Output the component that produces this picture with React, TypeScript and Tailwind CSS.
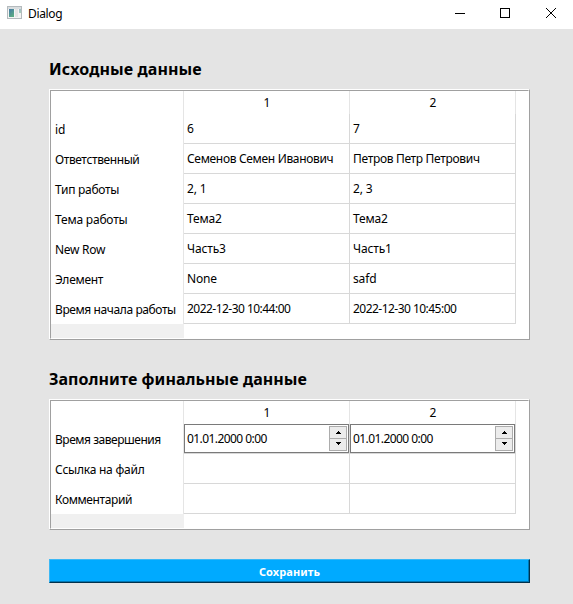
import React from "react";

type Row = { label: string; spacing: string; values: string[] };

const source: Row[] = [
  { label: "id", spacing: "tracking-normal", values: ["6", "7"] },
  { label: "Ответственный", spacing: "tracking-[-0.4px]", values: ["Семенов Семен Иванович", "Петров Петр Петрович"] },
  { label: "Тип работы", spacing: "tracking-[-0.28px]", values: ["2, 1", "2, 3"] },
  { label: "Тема работы", spacing: "tracking-[-0.2px]", values: ["Тема2", "Тема2"] },
  { label: "New Row", spacing: "tracking-[-0.3px]", values: ["Часть3", "Часть1"] },
  { label: "Элемент", spacing: "tracking-[-0.28px]", values: ["None", "safd"] },
  { label: "Время начала работы", spacing: "tracking-[-0.4px]", values: ["2022-12-30 10:44:00", "2022-12-30 10:45:00"] },
];

const final: Row[] = [
  { label: "Время завершения", spacing: "tracking-[-0.47px]", values: ["01.01.2000 0:00", "01.01.2000 0:00"] },
  { label: "Ссылка на файл", spacing: "tracking-[-0.24px]", values: ["", ""] },
  { label: "Комментарий", spacing: "tracking-[-0.37px]", values: ["", ""] },
];

function valueSpacing(value: string) {
  if (/^20/.test(value)) return "tracking-[-0.53px]";
  return value.length > 10 ? "tracking-[-0.32px]" : "tracking-[-0.15px]";
}

function SpinBox({ value }: { value: string }) {
  return (
    <div className="flex h-[29px] w-[165px] items-center justify-between border border-[#7a7a7a] bg-white pl-[2px] pr-px">
      <span className="tracking-[-0.57px]">{value}</span>
      <div className="flex h-[25px] w-[18px] flex-col border border-[#acacac] bg-[#ececec]">
        <div className="flex h-[12px] items-center justify-center border-b border-[#acacac]">
          <svg width="5" height="3" viewBox="0 0 5 3" shapeRendering="crispEdges"><path d="M2 0h1v1h1v1h1v1H0V2h1V1h1z" /></svg>
        </div>
        <div className="flex h-[11px] items-start justify-center pt-[3px]">
          <svg width="5" height="3" viewBox="0 0 5 3" shapeRendering="crispEdges"><path d="M0 0h5v1H4v1H3v1H2V2H1V1H0z" /></svg>
        </div>
      </div>
    </div>
  );
}

function Table({ rows, editor }: { rows: Row[]; editor?: boolean }) {
  return (
    <div className="w-[481px] border border-b-[#a0a0a0] border-l-white border-r-[#a0a0a0] border-t-white">
      <div className="border border-b-white border-l-[#a0a0a0] border-r-white border-t-[#a0a0a0] bg-white">
        <div className="flex h-[23px]">
          <div className="w-[133px] border-r border-[#e5e5e5]" />
          {["1", "2"].map((n) => (
            <div key={n} className="flex w-[166px] items-center justify-center border-r border-[#e5e5e5] pl-px">{n}</div>
          ))}
        </div>
        {rows.map((row, i) => (
          <div key={row.label} className="flex h-[30px]">
            <div className={`flex w-[133px] items-center border-r border-[#e5e5e5] pl-1 pt-[2px] ${row.spacing}`}>{row.label}</div>
            {row.values.map((v, j) =>
              editor && i === 0 ? (
                <div key={j} className="w-[166px] border-b border-r border-[#d8d8d8]"><SpinBox value={v} /></div>
              ) : (
                <div key={j} className={`flex w-[166px] items-center border-b border-r border-[#d8d8d8] pl-[3px] ${valueSpacing(v)}`}>{v}</div>
              )
            )}
          </div>
        ))}
        <div className="h-[14px] w-[133px] bg-[#f0f0f0]" />
      </div>
    </div>
  );
}

export default function App() {
  return (
    <div className="flex h-[604px] w-[573px] flex-col overflow-hidden whitespace-nowrap bg-[#e4e4e4] font-['Noto_Sans',sans-serif] text-[12px] leading-4 text-black">
      <header className="flex h-[29px] items-start bg-white">
        <svg className="ml-[7px] mt-[6px]" width="15" height="14" viewBox="0 0 15 14" shapeRendering="crispEdges">
          <defs>
            <linearGradient id="pane" x1="0" y1="0" x2="0.6" y2="1"><stop stopColor="#4478a8" /><stop offset="1" stopColor="#5bab83" /></linearGradient>
          </defs>
          <path fill="#b4babd" d="M0 0h15v13H0z" />
          <path fill="#d9dddf" d="M1 1h13v2H1z" />
          <path fill="#f4f4f4" d="M1 3h13v9H1z" />
          <path fill="url(#pane)" d="M2 3h5v8H2z" />
          <path fill="#e4e4e4" d="M8 3h3v8H8z" />
          <path fill="url(#pane)" opacity=".5" d="M12 3h2v4h-2z" />
        </svg>
        <span className="ml-[6px] mt-[6px] tracking-[-0.35px]">Dialog</span>
        <svg className="ml-auto mr-[17px] mt-2" width="101" height="10" viewBox="0 0 101 10" fill="none" stroke="#000">
          <path d="M0 5.5h10M45.5.5h9v9h-9z" shapeRendering="crispEdges" />
          <path d="M91 0l10 10M101 0L91 10" />
        </svg>
      </header>
      <main className="flex flex-col pl-[49px]">
        <h1 className="mt-[29px] h-[31px] text-[16px] font-bold leading-[22px] tracking-[0.1px]">Исходные данные</h1>
        <Table rows={source} />
        <h1 className="mt-[28px] h-[31px] text-[16px] font-bold leading-[22px] tracking-[0.05px]">Заполните финальные данные</h1>
        <Table rows={final} editor />
        <button className="mt-[29px] h-6 w-[481px] border border-b-[#00314d] border-l-[#3cb8f5] border-r-[#00314d] border-t-[#3cb8f5] bg-[#00aaff] pt-px text-[11px] font-bold leading-4 tracking-[0.1px] text-white shadow-[inset_-1px_-1px_0_#0077b3]">Сохранить</button>
      </main>
    </div>
  );
}
